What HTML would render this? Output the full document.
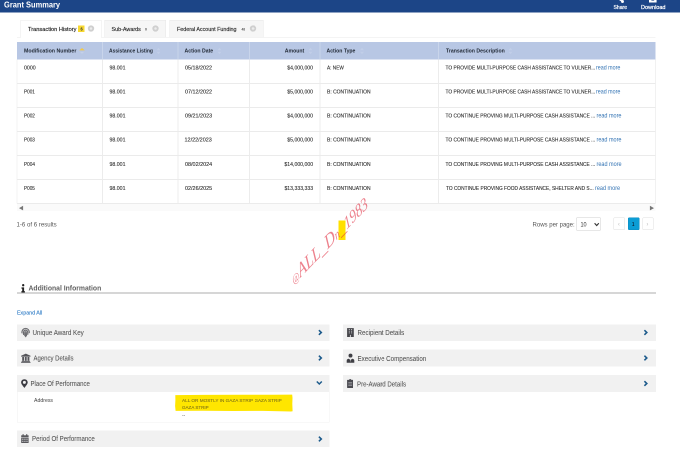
<!DOCTYPE html>
<html lang="en"><head><meta charset="utf-8"><title>Grant Summary</title>
<style>
html,body{margin:0;padding:0;background:#fff}
body{width:680px;height:452px;position:relative;overflow:hidden;font-family:"Liberation Sans",sans-serif}
#page{position:absolute;left:0;top:-40px;width:1360px;height:984px;transform:scale(0.5);transform-origin:0 0;will-change:transform;overflow:hidden}
#in{position:absolute;left:0;top:80px;width:1360px;height:904px}
.b{position:absolute}
.t{position:absolute;white-space:pre;display:block}
</style></head><body>
<div id="page"><div id="in">
<div class="b" style="left:0px;top:0px;width:1360px;height:25px;background:#1c4587"></div>
<div class="b" style="left:34px;top:74px;width:1277px;height:1px;background:#e9e9e9"></div>
<div class="b" style="left:41px;top:40px;width:162px;height:35px;background:#fff;border:1px solid #e9e9e9;border-bottom:none;box-sizing:border-box"></div>
<div class="b" style="left:209px;top:40px;width:123px;height:35px;background:#f6f6f6;border:1px solid #e6e6e6;box-sizing:border-box"></div>
<div class="b" style="left:339px;top:40px;width:188px;height:35px;background:#f6f6f6;border:1px solid #e6e6e6;box-sizing:border-box"></div>
<div class="b" style="left:156px;top:51px;width:13px;height:13px;background:#f7d831"></div>
<div class="b" style="left:34px;top:84px;width:1277px;height:35px;background:#b8c7e4"></div>
<div class="b" style="left:204px;top:84px;width:2px;height:35px;background:#c9d5eb"></div>
<div class="b" style="left:204px;top:119px;width:2px;height:288px;background:#ececec"></div>
<div class="b" style="left:355px;top:84px;width:2px;height:35px;background:#c9d5eb"></div>
<div class="b" style="left:355px;top:119px;width:2px;height:288px;background:#ececec"></div>
<div class="b" style="left:498px;top:84px;width:2px;height:35px;background:#c9d5eb"></div>
<div class="b" style="left:498px;top:119px;width:2px;height:288px;background:#ececec"></div>
<div class="b" style="left:639px;top:84px;width:2px;height:35px;background:#c9d5eb"></div>
<div class="b" style="left:639px;top:119px;width:2px;height:288px;background:#ececec"></div>
<div class="b" style="left:876px;top:84px;width:2px;height:35px;background:#c9d5eb"></div>
<div class="b" style="left:876px;top:119px;width:2px;height:288px;background:#ececec"></div>
<div class="b" style="left:33px;top:119px;width:2px;height:288px;background:#f3f3f3"></div>
<div class="b" style="left:1310px;top:119px;width:2px;height:288px;background:#f1f1f1"></div>
<div class="b" style="left:34px;top:166px;width:1277px;height:2px;background:#ebebeb"></div>
<div class="b" style="left:34px;top:214px;width:1277px;height:2px;background:#ebebeb"></div>
<div class="b" style="left:34px;top:262px;width:1277px;height:2px;background:#ebebeb"></div>
<div class="b" style="left:34px;top:310px;width:1277px;height:2px;background:#ebebeb"></div>
<div class="b" style="left:34px;top:358px;width:1277px;height:2px;background:#ebebeb"></div>
<div class="b" style="left:34px;top:406px;width:1277px;height:2px;background:#ebebeb"></div>
<div class="b" style="left:34px;top:408px;width:1277px;height:14px;background:#fafafa"></div>
<div class="b" style="left:1152px;top:435px;width:50px;height:26px;background:#fff;border:1px solid #cfcfcf;box-sizing:border-box;border-radius:2px"></div>
<div class="b" style="left:1227px;top:435px;width:23px;height:25px;background:#fff;border:1px solid #dedede;box-sizing:border-box;border-radius:2px"></div>
<div class="b" style="left:1256px;top:435px;width:23px;height:25px;background:#0c9dd5;border:1px solid #0b8cc2;box-sizing:border-box;border-radius:2px"></div>
<div class="b" style="left:1285px;top:435px;width:22px;height:25px;background:#fff;border:1px solid #dedede;box-sizing:border-box;border-radius:2px"></div>
<div class="b" style="left:677px;top:441px;width:14px;height:39px;background:#ffe000"></div>
<div class="b" style="left:34px;top:585px;width:1278px;height:2px;background:#adadad"></div>
<div class="b" style="left:34px;top:649px;width:625px;height:33px;background:#f1f1f1"></div>
<div class="b" style="left:686px;top:649px;width:626px;height:33px;background:#f1f1f1"></div>
<div class="b" style="left:34px;top:699px;width:625px;height:34px;background:#f1f1f1"></div>
<div class="b" style="left:686px;top:699px;width:626px;height:34px;background:#f1f1f1"></div>
<div class="b" style="left:34px;top:750px;width:625px;height:34px;background:#f1f1f1"></div>
<div class="b" style="left:686px;top:750px;width:626px;height:34px;background:#f1f1f1"></div>
<div class="b" style="left:34px;top:861px;width:625px;height:33px;background:#f1f1f1"></div>
<div class="b" style="left:34px;top:784px;width:625px;height:61px;background:#fff;border:1px solid #f0f0f0;border-top:none;box-sizing:border-box"></div>
<svg class="b" style="left:346px;top:784px" width="244" height="44" viewBox="0 0 122 22"><path d="M2.3 3.1 L30 2.9 L70 2.7 L100 2.8 L119.2 2.6 L119.5 6 L119.3 12 L119.6 19.2 L118 19.5 L90 18.9 L60 19 L30 18.8 L2.6 18.9 L2.1 14 L2.4 8 Z" fill="#ffe600"/></svg>
<svg class="b" style="left:175.0px;top:49.8px;" width="14" height="14" viewBox="0 0 7 7"><circle cx="3.5" cy="3.5" r="3.15" fill="#cfcfcf"/><circle cx="3.5" cy="3.5" r="1.25" fill="#ececec"/></svg>
<svg class="b" style="left:304.2px;top:49.8px;" width="14" height="14" viewBox="0 0 7 7"><circle cx="3.5" cy="3.5" r="3.15" fill="#cfcfcf"/><circle cx="3.5" cy="3.5" r="1.25" fill="#ececec"/></svg>
<svg class="b" style="left:499.0px;top:49.8px;" width="14" height="14" viewBox="0 0 7 7"><circle cx="3.5" cy="3.5" r="3.15" fill="#cfcfcf"/><circle cx="3.5" cy="3.5" r="1.25" fill="#ececec"/></svg>
<svg class="b" style="left:158px;top:94.8px;" width="12" height="16" viewBox="0 0 6 8"><path d="M0.2 2.9 L3 0.5 L5.8 2.9 Z" fill="#f3c94b"/><path d="M0.8 4.4 L3 6.4 L5.2 4.4 Z" fill="#c4d0e9"/></svg>
<svg class="b" style="left:311.6px;top:93.6px;" width="10" height="16" viewBox="0 0 5 8"><path d="M0.4 3.2 L2.5 0.8 L4.6 3.2 Z M0.4 4.8 L2.5 7.2 L4.6 4.8 Z" fill="#c1cee8"/></svg>
<svg class="b" style="left:434.2px;top:93.6px;" width="10" height="16" viewBox="0 0 5 8"><path d="M0.4 3.2 L2.5 0.8 L4.6 3.2 Z M0.4 4.8 L2.5 7.2 L4.6 4.8 Z" fill="#c1cee8"/></svg>
<svg class="b" style="left:616.2px;top:93.6px;" width="10" height="16" viewBox="0 0 5 8"><path d="M0.4 3.2 L2.5 0.8 L4.6 3.2 Z M0.4 4.8 L2.5 7.2 L4.6 4.8 Z" fill="#c1cee8"/></svg>
<svg class="b" style="left:719.4px;top:93.6px;" width="10" height="16" viewBox="0 0 5 8"><path d="M0.4 3.2 L2.5 0.8 L4.6 3.2 Z M0.4 4.8 L2.5 7.2 L4.6 4.8 Z" fill="#c1cee8"/></svg>
<svg class="b" style="left:1016.2px;top:93.6px;" width="10" height="16" viewBox="0 0 5 8"><path d="M0.4 3.2 L2.5 0.8 L4.6 3.2 Z M0.4 4.8 L2.5 7.2 L4.6 4.8 Z" fill="#c1cee8"/></svg>
<svg class="b" style="left:1234px;top:-6.4px;" width="15.0" height="12.8" viewBox="0 0 7.5 6.4"><circle cx="5.5" cy="4.5" r="1.45" fill="#fff"/><path d="M0.8 1.4 L5.2 4.3" stroke="#fff" stroke-width="1.3"/></svg>
<svg class="b" style="left:1298.4px;top:-6px;" width="15.2" height="11.2" viewBox="0 0 7.6 5.6"><rect x="0" y="0" width="7.6" height="5.6" fill="#fff"/><rect x="2.4" y="0" width="2.8" height="3.6" fill="#1c4587"/></svg>
<svg class="b" style="left:37.2px;top:411.2px;" width="10" height="10.4" viewBox="0 0 5 5.2"><path d="M4.6 0.3 L4.6 4.9 L0.5 2.6 Z" fill="#777"/></svg>
<svg class="b" style="left:1298.8px;top:411.4px;" width="10" height="10.4" viewBox="0 0 5 5.2"><path d="M0.4 0.3 L0.4 4.9 L4.5 2.6 Z" fill="#777"/></svg>
<svg class="b" style="left:1188px;top:444.8px;" width="10.8" height="8" viewBox="0 0 5.4 4"><path d="M0.6 0.7 L2.7 3 L4.8 0.7" fill="none" stroke="#333" stroke-width="1.1"/></svg>
<svg class="b" style="left:41.6px;top:567.6px;" width="8.4" height="17.6" viewBox="0 0 4.2 8.8"><circle cx="2.2" cy="1.2" r="1.15" fill="#222"/><path d="M0.5 3.4 H3.1 V7.1 H3.9 V8.5 H0.4 V7.1 H1.2 V4.8 H0.5 Z" fill="#222"/></svg>
<svg class="b" style="left:636px;top:659.4px;" width="9.2" height="12" viewBox="0 0 4.6 6"><path d="M0.9 0.7 L3.3 3 L0.9 5.3" fill="none" stroke="#1d5b8c" stroke-width="1.6"/></svg>
<svg class="b" style="left:636px;top:710.4px;" width="9.2" height="12" viewBox="0 0 4.6 6"><path d="M0.9 0.7 L3.3 3 L0.9 5.3" fill="none" stroke="#1d5b8c" stroke-width="1.6"/></svg>
<svg class="b" style="left:636px;top:871.6px;" width="9.2" height="12" viewBox="0 0 4.6 6"><path d="M0.9 0.7 L3.3 3 L0.9 5.3" fill="none" stroke="#1d5b8c" stroke-width="1.6"/></svg>
<svg class="b" style="left:1287.2px;top:659.4px;" width="9.2" height="12" viewBox="0 0 4.6 6"><path d="M0.9 0.7 L3.3 3 L0.9 5.3" fill="none" stroke="#1d5b8c" stroke-width="1.6"/></svg>
<svg class="b" style="left:1287.2px;top:710.4px;" width="9.2" height="12" viewBox="0 0 4.6 6"><path d="M0.9 0.7 L3.3 3 L0.9 5.3" fill="none" stroke="#1d5b8c" stroke-width="1.6"/></svg>
<svg class="b" style="left:1287.2px;top:761.4px;" width="9.2" height="12" viewBox="0 0 4.6 6"><path d="M0.9 0.7 L3.3 3 L0.9 5.3" fill="none" stroke="#1d5b8c" stroke-width="1.6"/></svg>
<svg class="b" style="left:632.4px;top:761.2px;" width="13.2" height="10" viewBox="0 0 6.6 5"><path d="M0.8 1 L3.3 3.5 L5.8 1" fill="none" stroke="#1d5b8c" stroke-width="1.5"/></svg>
<svg class="b" style="left:42px;top:655.2px;" width="18.4" height="20" viewBox="0 0 9.2 10"><g fill="none" stroke="#6a6a6e" stroke-width="1.05" stroke-linecap="round"><path d="M0.9 5.4 C0.7 2.6 2.4 0.9 4.6 0.9 C6.8 0.9 8.5 2.6 8.3 5.2"/><path d="M2.5 7 C2.2 4.4 2.9 2.6 4.6 2.6 C6.3 2.6 7 4.4 6.8 6.8"/><path d="M3.8 8.2 C3.6 6.2 3.8 4.3 4.6 4.3 C5.4 4.3 5.6 6.2 5.4 8.4"/><path d="M4.6 6 V9.2"/></g><circle cx="4.6" cy="4.8" r="3.5" fill="#6a6a6e" opacity="0.28"/></svg>
<svg class="b" style="left:41.8px;top:706.8px;" width="19.2" height="18.8" viewBox="0 0 9.6 9.4"><g fill="#55555a"><path d="M4.8 0.1 L9.5 2.3 V3.1 H0.1 V2.3 Z"/><rect x="1.2" y="3.4" width="1.9" height="3.9"/><rect x="3.9" y="3.4" width="1.8" height="3.9"/><rect x="6.5" y="3.4" width="1.9" height="3.9"/><rect x="0.7" y="7.4" width="8.2" height="0.9"/><rect x="0.1" y="8.4" width="9.4" height="0.9"/></g></svg>
<svg class="b" style="left:42px;top:758px;" width="14" height="18.4" viewBox="0 0 7 9.2"><path fill-rule="evenodd" fill="#3b3b42" d="M3.4 0.2 C5.3 0.2 6.7 1.6 6.7 3.4 C6.7 5.2 4.6 7.2 3.4 9 C2.2 7.2 0.1 5.2 0.1 3.4 C0.1 1.6 1.5 0.2 3.4 0.2 Z M3.4 1.9 A1.5 1.5 0 1 0 3.4 4.9 A1.5 1.5 0 1 0 3.4 1.9 Z"/></svg>
<svg class="b" style="left:42px;top:867.6px;" width="15.6" height="18.4" viewBox="0 0 7.8 9.2"><g fill="#58585c"><rect x="1.5" y="0.2" width="1.2" height="2"/><rect x="5.1" y="0.2" width="1.2" height="2"/><rect x="0.2" y="1.3" width="7.4" height="2"/><rect x="0.2" y="3.8" width="7.4" height="5.2"/></g><g fill="#cfcfd2"><rect x="1.2" y="4.7" width="1.2" height="1.1"/><rect x="3.3" y="4.7" width="1.2" height="1.1"/><rect x="5.4" y="4.7" width="1.2" height="1.1"/><rect x="1.2" y="6.8" width="1.2" height="1.1"/><rect x="3.3" y="6.8" width="1.2" height="1.1"/><rect x="5.4" y="6.8" width="1.2" height="1.1"/></g></svg>
<svg class="b" style="left:694px;top:656.2px;" width="13.8" height="18.2" viewBox="0 0 6.9 9.1"><rect x="0.1" y="0.1" width="6.7" height="8.9" fill="#46464b"/><g fill="#c4c4c8"><rect x="1.8" y="1" width="1" height="1"/><rect x="1.8" y="2.7" width="1" height="1"/><rect x="1.8" y="4.4" width="1" height="1"/><rect x="4.1" y="1" width="1" height="1"/><rect x="4.1" y="2.7" width="1" height="1"/><rect x="4.1" y="4.4" width="1" height="1"/><rect x="2.9" y="6.9" width="1.1" height="2.1"/></g></svg>
<svg class="b" style="left:692.8px;top:707.0px;" width="16" height="18.8" viewBox="0 0 8 9.4"><g fill="#3f3f45"><circle cx="4" cy="2.1" r="1.95"/><path d="M0.2 9.2 V7 C0.2 5.8 1.2 5.2 2.4 5.2 L4 6.6 L5.6 5.2 C6.8 5.2 7.8 5.8 7.8 7 V9.2 Z"/></g><rect x="3.75" y="4.4" width="0.5" height="3.6" fill="#ddd"/></svg>
<svg class="b" style="left:693.6px;top:758.2px;" width="12.8" height="18.2" viewBox="0 0 6.4 9.1"><g fill="#4a4a50"><rect x="2.2" y="0.1" width="2" height="1.4" rx="0.5"/><rect x="0.1" y="0.9" width="6.2" height="8.1" rx="0.4"/></g><g fill="#9a9aa0"><rect x="1.3" y="3" width="3.8" height="0.8"/><rect x="1.3" y="4.6" width="3.8" height="0.8"/><rect x="1.3" y="6.2" width="3.8" height="0.8"/></g></svg>
<span class="t" style="left:8.4px;transform-origin:0 50%;top:-1px;line-height:22px;font-size:15.7px;font-weight:700;color:#fff;transform:scaleX(0.9532);">Grant Summary</span>
<span class="t" style="left:1227.3px;transform-origin:0 50%;top:6px;line-height:16px;font-size:11.4px;font-weight:400;color:#fff;transform:scaleX(0.8933);-webkit-text-stroke:0.44px currentColor;">Share</span>
<span class="t" style="left:1281.6px;transform-origin:0 50%;top:6px;line-height:16px;font-size:11.4px;font-weight:400;color:#fff;transform:scaleX(0.9667);-webkit-text-stroke:0.44px currentColor;">Download</span>
<span class="t" style="left:55.5px;transform-origin:0 50%;top:51px;line-height:15px;font-size:10.6px;font-weight:400;color:#1c1c1c;transform:scaleX(1.0670);-webkit-text-stroke:0.28px currentColor;">Transaction History</span>
<span class="t" style="left:160.7px;transform-origin:0 50%;top:52px;line-height:12px;font-size:8.4px;font-weight:700;color:#333;transform:scaleX(0.9418);">6</span>
<span class="t" style="left:223.2px;transform-origin:0 50%;top:51px;line-height:15px;font-size:10.6px;font-weight:400;color:#2a2a2a;transform:scaleX(1.0205);-webkit-text-stroke:0.28px currentColor;">Sub-Awards</span>
<span class="t" style="left:290.3px;transform-origin:0 50%;top:53px;line-height:11px;font-size:8px;font-weight:700;color:#555;transform:scaleX(0.8982);">0</span>
<span class="t" style="left:353.5px;transform-origin:0 50%;top:51px;line-height:15px;font-size:10.6px;font-weight:400;color:#2a2a2a;transform:scaleX(1.0098);-webkit-text-stroke:0.28px currentColor;">Federal Account Funding</span>
<span class="t" style="left:483.4px;transform-origin:0 50%;top:53px;line-height:11px;font-size:8px;font-weight:700;color:#555;transform:scaleX(0.8084);">48</span>
<span class="t" style="left:47.6px;transform-origin:0 50%;top:93px;line-height:17px;font-size:11.8px;font-weight:700;color:#1f2733;transform:scaleX(0.8928);">Modification Number</span>
<span class="t" style="left:218.4px;transform-origin:0 50%;top:93px;line-height:17px;font-size:11.8px;font-weight:700;color:#1f2733;transform:scaleX(0.8434);">Assistance Listing</span>
<span class="t" style="left:369.3px;transform-origin:0 50%;top:93px;line-height:17px;font-size:11.8px;font-weight:700;color:#1f2733;transform:scaleX(0.8746);">Action Date</span>
<span class="t" style="right:751.3px;transform-origin:100% 50%;top:93px;line-height:17px;font-size:11.8px;font-weight:700;color:#1f2733;transform:scaleX(0.8751);">Amount</span>
<span class="t" style="left:653.3px;transform-origin:0 50%;top:93px;line-height:17px;font-size:11.8px;font-weight:700;color:#1f2733;transform:scaleX(0.8673);">Action Type</span>
<span class="t" style="left:891.5px;transform-origin:0 50%;top:93px;line-height:17px;font-size:11.8px;font-weight:700;color:#1f2733;transform:scaleX(0.8743);">Transaction Description</span>
<span class="t" style="left:47.7px;transform-origin:0 50%;top:128px;line-height:15px;font-size:11.0px;font-weight:400;color:#2b2b2b;transform:scaleX(0.9583);-webkit-text-stroke:0.2px currentColor;">0000</span>
<span class="t" style="left:218.8px;transform-origin:0 50%;top:128px;line-height:15px;font-size:11.0px;font-weight:400;color:#2b2b2b;transform:scaleX(0.9495);-webkit-text-stroke:0.2px currentColor;">98.001</span>
<span class="t" style="left:369.8px;transform-origin:0 50%;top:128px;line-height:15px;font-size:11.0px;font-weight:400;color:#2b2b2b;transform:scaleX(0.9828);-webkit-text-stroke:0.2px currentColor;">05/18/2022</span>
<span class="t" style="right:733.7px;transform-origin:100% 50%;top:128px;line-height:15px;font-size:11.0px;font-weight:400;color:#2b2b2b;transform:scaleX(0.9347);-webkit-text-stroke:0.2px currentColor;">$4,000,000</span>
<span class="t" style="left:653.6px;transform-origin:0 50%;top:128px;line-height:15px;font-size:11.0px;font-weight:400;color:#2b2b2b;transform:scaleX(0.8597);-webkit-text-stroke:0.2px currentColor;">A: NEW</span>
<span class="t" style="left:891.4px;transform-origin:0 50%;top:128px;line-height:15px;font-size:11.0px;font-weight:400;color:#2b2b2b;transform:scaleX(0.8806);-webkit-text-stroke:0.2px currentColor;">TO PROVIDE MULTI-PURPOSE CASH ASSISTANCE TO VULNER...</span>
<span class="t" style="left:1192.4px;transform-origin:0 50%;top:127px;line-height:17px;font-size:12.0px;font-weight:400;color:#3474b4;transform:scaleX(0.8899);">read more</span>
<span class="t" style="left:47.8px;transform-origin:0 50%;top:176px;line-height:15px;font-size:11.0px;font-weight:400;color:#2b2b2b;transform:scaleX(0.8486);-webkit-text-stroke:0.2px currentColor;">P001</span>
<span class="t" style="left:218.8px;transform-origin:0 50%;top:176px;line-height:15px;font-size:11.0px;font-weight:400;color:#2b2b2b;transform:scaleX(0.9495);-webkit-text-stroke:0.2px currentColor;">98.001</span>
<span class="t" style="left:369.9px;transform-origin:0 50%;top:176px;line-height:15px;font-size:11.0px;font-weight:400;color:#2b2b2b;transform:scaleX(0.9819);-webkit-text-stroke:0.2px currentColor;">07/12/2022</span>
<span class="t" style="right:733.7px;transform-origin:100% 50%;top:176px;line-height:15px;font-size:11.0px;font-weight:400;color:#2b2b2b;transform:scaleX(0.9347);-webkit-text-stroke:0.2px currentColor;">$5,000,000</span>
<span class="t" style="left:653.5px;transform-origin:0 50%;top:176px;line-height:15px;font-size:11.0px;font-weight:400;color:#2b2b2b;transform:scaleX(0.9037);-webkit-text-stroke:0.2px currentColor;">B: CONTINUATION</span>
<span class="t" style="left:891.4px;transform-origin:0 50%;top:176px;line-height:15px;font-size:11.0px;font-weight:400;color:#2b2b2b;transform:scaleX(0.8806);-webkit-text-stroke:0.2px currentColor;">TO PROVIDE MULTI-PURPOSE CASH ASSISTANCE TO VULNER...</span>
<span class="t" style="left:1192.4px;transform-origin:0 50%;top:175px;line-height:17px;font-size:12.0px;font-weight:400;color:#3474b4;transform:scaleX(0.8899);">read more</span>
<span class="t" style="left:47.8px;transform-origin:0 50%;top:224px;line-height:15px;font-size:11.0px;font-weight:400;color:#2b2b2b;transform:scaleX(0.8486);-webkit-text-stroke:0.2px currentColor;">P002</span>
<span class="t" style="left:218.8px;transform-origin:0 50%;top:224px;line-height:15px;font-size:11.0px;font-weight:400;color:#2b2b2b;transform:scaleX(0.9495);-webkit-text-stroke:0.2px currentColor;">98.001</span>
<span class="t" style="left:369.7px;transform-origin:0 50%;top:224px;line-height:15px;font-size:11.0px;font-weight:400;color:#2b2b2b;transform:scaleX(0.9844);-webkit-text-stroke:0.2px currentColor;">09/21/2023</span>
<span class="t" style="right:733.7px;transform-origin:100% 50%;top:224px;line-height:15px;font-size:11.0px;font-weight:400;color:#2b2b2b;transform:scaleX(0.9347);-webkit-text-stroke:0.2px currentColor;">$4,000,000</span>
<span class="t" style="left:653.5px;transform-origin:0 50%;top:224px;line-height:15px;font-size:11.0px;font-weight:400;color:#2b2b2b;transform:scaleX(0.9037);-webkit-text-stroke:0.2px currentColor;">B: CONTINUATION</span>
<span class="t" style="left:891.4px;transform-origin:0 50%;top:224px;line-height:15px;font-size:11.0px;font-weight:400;color:#2b2b2b;transform:scaleX(0.8828);-webkit-text-stroke:0.2px currentColor;">TO CONTINUE PROVING MULTI-PURPOSE CASH ASSISTANCE ...</span>
<span class="t" style="left:1193.4px;transform-origin:0 50%;top:223px;line-height:17px;font-size:12.0px;font-weight:400;color:#3474b4;transform:scaleX(0.9135);">read more</span>
<span class="t" style="left:47.7px;transform-origin:0 50%;top:272px;line-height:15px;font-size:11.0px;font-weight:400;color:#2b2b2b;transform:scaleX(0.8478);-webkit-text-stroke:0.2px currentColor;">P003</span>
<span class="t" style="left:218.8px;transform-origin:0 50%;top:272px;line-height:15px;font-size:11.0px;font-weight:400;color:#2b2b2b;transform:scaleX(0.9495);-webkit-text-stroke:0.2px currentColor;">98.001</span>
<span class="t" style="left:368.9px;transform-origin:0 50%;top:272px;line-height:15px;font-size:11.0px;font-weight:400;color:#2b2b2b;transform:scaleX(0.9916);-webkit-text-stroke:0.2px currentColor;">12/22/2023</span>
<span class="t" style="right:733.7px;transform-origin:100% 50%;top:272px;line-height:15px;font-size:11.0px;font-weight:400;color:#2b2b2b;transform:scaleX(0.9347);-webkit-text-stroke:0.2px currentColor;">$5,000,000</span>
<span class="t" style="left:653.5px;transform-origin:0 50%;top:272px;line-height:15px;font-size:11.0px;font-weight:400;color:#2b2b2b;transform:scaleX(0.9037);-webkit-text-stroke:0.2px currentColor;">B: CONTINUATION</span>
<span class="t" style="left:891.4px;transform-origin:0 50%;top:272px;line-height:15px;font-size:11.0px;font-weight:400;color:#2b2b2b;transform:scaleX(0.8828);-webkit-text-stroke:0.2px currentColor;">TO CONTINUE PROVING MULTI-PURPOSE CASH ASSISTANCE ...</span>
<span class="t" style="left:1193.4px;transform-origin:0 50%;top:271px;line-height:17px;font-size:12.0px;font-weight:400;color:#3474b4;transform:scaleX(0.9135);">read more</span>
<span class="t" style="left:47.5px;transform-origin:0 50%;top:321px;line-height:15px;font-size:11.0px;font-weight:400;color:#2b2b2b;transform:scaleX(0.8511);-webkit-text-stroke:0.2px currentColor;">P004</span>
<span class="t" style="left:218.6px;transform-origin:0 50%;top:321px;line-height:15px;font-size:11.0px;font-weight:400;color:#2b2b2b;transform:scaleX(0.9493);-webkit-text-stroke:0.2px currentColor;">98.001</span>
<span class="t" style="left:369.5px;transform-origin:0 50%;top:321px;line-height:15px;font-size:11.0px;font-weight:400;color:#2b2b2b;transform:scaleX(0.9877);-webkit-text-stroke:0.2px currentColor;">08/02/2024</span>
<span class="t" style="right:733.7px;transform-origin:100% 50%;top:321px;line-height:15px;font-size:11.0px;font-weight:400;color:#2b2b2b;transform:scaleX(0.9376);-webkit-text-stroke:0.2px currentColor;">$14,000,000</span>
<span class="t" style="left:653.5px;transform-origin:0 50%;top:321px;line-height:15px;font-size:11.0px;font-weight:400;color:#2b2b2b;transform:scaleX(0.9038);-webkit-text-stroke:0.2px currentColor;">B: CONTINUATION</span>
<span class="t" style="left:891.4px;transform-origin:0 50%;top:321px;line-height:15px;font-size:11.0px;font-weight:400;color:#2b2b2b;transform:scaleX(0.8823);-webkit-text-stroke:0.2px currentColor;">TO CONTINUE PROVING MULTI-PURPOSE CASH ASSISTANCE ...</span>
<span class="t" style="left:1193.4px;transform-origin:0 50%;top:320px;line-height:17px;font-size:12.0px;font-weight:400;color:#3474b4;transform:scaleX(0.9183);">read more</span>
<span class="t" style="left:47.7px;transform-origin:0 50%;top:369px;line-height:15px;font-size:11.0px;font-weight:400;color:#2b2b2b;transform:scaleX(0.8464);-webkit-text-stroke:0.2px currentColor;">P005</span>
<span class="t" style="left:218.6px;transform-origin:0 50%;top:369px;line-height:15px;font-size:11.0px;font-weight:400;color:#2b2b2b;transform:scaleX(0.9493);-webkit-text-stroke:0.2px currentColor;">98.001</span>
<span class="t" style="left:369.6px;transform-origin:0 50%;top:369px;line-height:15px;font-size:11.0px;font-weight:400;color:#2b2b2b;transform:scaleX(0.9871);-webkit-text-stroke:0.2px currentColor;">02/26/2025</span>
<span class="t" style="right:733.8px;transform-origin:100% 50%;top:369px;line-height:15px;font-size:11.0px;font-weight:400;color:#2b2b2b;transform:scaleX(0.9365);-webkit-text-stroke:0.2px currentColor;">$13,333,333</span>
<span class="t" style="left:653.5px;transform-origin:0 50%;top:369px;line-height:15px;font-size:11.0px;font-weight:400;color:#2b2b2b;transform:scaleX(0.9038);-webkit-text-stroke:0.2px currentColor;">B: CONTINUATION</span>
<span class="t" style="left:891.5px;transform-origin:0 50%;top:369px;line-height:15px;font-size:11.0px;font-weight:400;color:#2b2b2b;transform:scaleX(0.8769);-webkit-text-stroke:0.2px currentColor;">TO CONTINUE PROVING FOOD ASSISTANCE, SHELTER AND S...</span>
<span class="t" style="left:1189.5px;transform-origin:0 50%;top:368px;line-height:17px;font-size:12.0px;font-weight:400;color:#3474b4;transform:scaleX(0.9183);">read more</span>
<span class="t" style="left:33.2px;transform-origin:0 50%;top:441px;line-height:17px;font-size:12.0px;font-weight:400;color:#555;transform:scaleX(1.0134);">1-6 of 6 results</span>
<span class="t" style="left:1064.9px;transform-origin:0 50%;top:440px;line-height:18px;font-size:12.6px;font-weight:400;color:#555;transform:scaleX(0.9559);">Rows per page:</span>
<span class="t" style="left:1160.7px;transform-origin:0 50%;top:441px;line-height:17px;font-size:12.2px;font-weight:400;color:#333;transform:scaleX(0.8995);">10</span>
<span class="t" style="left:1264.3px;transform-origin:0 50%;top:440px;line-height:16px;font-size:11.2px;font-weight:700;color:#0f2740;transform:scaleX(0.7699);">1</span>
<span class="t" style="left:1236.3px;transform-origin:0 50%;top:440px;line-height:17px;font-size:12px;font-weight:400;color:#bbb;transform:scaleX(0.9000);">‹</span>
<span class="t" style="left:1292.8px;transform-origin:0 50%;top:440px;line-height:17px;font-size:12px;font-weight:400;color:#bbb;transform:scaleX(0.9000);">›</span>
<span class="t" style="left:57.4px;transform-origin:0 50%;top:566px;line-height:20px;font-size:14.4px;font-weight:700;color:#626262;transform:scaleX(0.9481);">Additional Information</span>
<span class="t" style="left:33.9px;transform-origin:0 50%;top:618px;line-height:15px;font-size:10.6px;font-weight:400;color:#4288cb;transform:scaleX(1.0075);-webkit-text-stroke:0.3px currentColor;">Expand All</span>
<span class="t" style="left:65.0px;transform-origin:0 50%;top:655px;line-height:20px;font-size:14.0px;font-weight:400;color:#525252;transform:scaleX(0.8928);-webkit-text-stroke:0.1px currentColor;">Unique Award Key</span>
<span class="t" style="left:66.5px;transform-origin:0 50%;top:706px;line-height:20px;font-size:14.0px;font-weight:400;color:#525252;transform:scaleX(0.8567);-webkit-text-stroke:0.1px currentColor;">Agency Details</span>
<span class="t" style="left:60.9px;transform-origin:0 50%;top:757px;line-height:20px;font-size:14.0px;font-weight:400;color:#525252;transform:scaleX(0.8629);-webkit-text-stroke:0.1px currentColor;">Place Of Performance</span>
<span class="t" style="left:63.5px;transform-origin:0 50%;top:867px;line-height:20px;font-size:14.0px;font-weight:400;color:#525252;transform:scaleX(0.8765);-webkit-text-stroke:0.1px currentColor;">Period Of Performance</span>
<span class="t" style="left:714.6px;transform-origin:0 50%;top:655px;line-height:20px;font-size:14.0px;font-weight:400;color:#525252;transform:scaleX(0.8903);-webkit-text-stroke:0.1px currentColor;">Recipient Details</span>
<span class="t" style="left:714.6px;transform-origin:0 50%;top:707px;line-height:20px;font-size:14.0px;font-weight:400;color:#525252;transform:scaleX(0.8881);-webkit-text-stroke:0.1px currentColor;">Executive Compensation</span>
<span class="t" style="left:714.1px;transform-origin:0 50%;top:758px;line-height:20px;font-size:14.0px;font-weight:400;color:#525252;transform:scaleX(0.8704);-webkit-text-stroke:0.1px currentColor;">Pre-Award Details</span>
<span class="t" style="left:68.0px;transform-origin:0 50%;top:794px;line-height:14px;font-size:10.2px;font-weight:400;color:#444;transform:scaleX(1.0177);">Address</span>
<span class="t" style="left:364.1px;transform-origin:0 50%;top:794px;line-height:14px;font-size:9.8px;font-weight:400;color:#7f7318;transform:scaleX(0.9511);-webkit-text-stroke:0.16px currentColor;">ALL OR MOSTLY IN GAZA STRIP GAZA STRIP</span>
<span class="t" style="left:364.2px;transform-origin:0 50%;top:808px;line-height:14px;font-size:9.8px;font-weight:400;color:#7f7318;transform:scaleX(0.9252);-webkit-text-stroke:0.16px currentColor;">GAZA STRIP</span>
<span class="t" style="left:364.2px;transform-origin:0 50%;top:824px;line-height:14px;font-size:10.0px;font-weight:400;color:#555;transform:scaleX(0.9593);">--</span>
<div class="t" id="wm" style="left:592px;top:541px;font-family:'Liberation Serif',serif;font-style:italic;font-size:33px;line-height:34px;color:#e0283c;opacity:.58;transform-origin:0 100%;transform:rotate(-46deg) skewX(-24deg) scaleX(1.07);letter-spacing:0px"><span style="font-size:19px">@</span>ALL_D<span style="font-size:22px">n</span>_<span style="font-size:30px">1983</span></div>
</div></div>
</body></html>
